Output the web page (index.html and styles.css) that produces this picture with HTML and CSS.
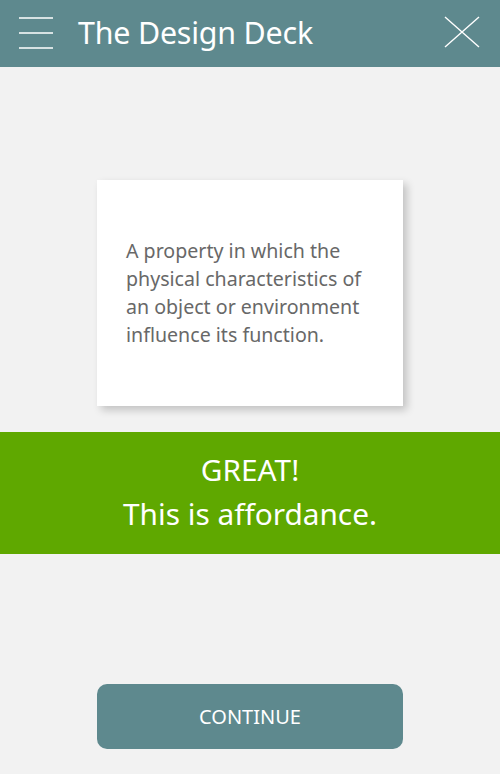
FILE: index.html
```html
<!DOCTYPE html>
<html>
<head>
<meta charset="utf-8">
<link rel="stylesheet" href="styles.css">
</head>
<body>
<div class="app">
  <header class="topbar">
    <svg class="menu" width="36" height="34" viewBox="0 0 36 34">
      <path d="M1 2H35M1 17H35M1 32H35" stroke="#fff" stroke-width="1.3" fill="none"/>
    </svg>
    <h1 class="title">The Design Deck</h1>
    <svg class="close" width="36" height="32" viewBox="0 0 36 32">
      <path d="M1 1L35 31M35 1L1 31" stroke="#fff" stroke-width="1.4" fill="none"/>
    </svg>
  </header>
  <main class="content">
    <div class="card">
      <p>A property in which the physical characteristics of an object or environment influence its function.</p>
    </div>
    <div class="result">
      <div>GREAT!</div>
      <div>This is affordance.</div>
    </div>
    <div class="spacer"></div>
    <button class="continue">CONTINUE</button>
  </main>
</div>
</body>
</html>
```

FILE: styles.css
```css
html, body {
  margin: 0;
  padding: 0;
}
body {
  width: 500px;
  height: 774px;
  background: #f2f2f2;
  font-family: "Noto Sans", "Open Sans", sans-serif;
  overflow: hidden;
}
.app {
  display: flex;
  flex-direction: column;
  height: 774px;
}
.topbar {
  height: 67px;
  background: #5e898e;
  display: flex;
  align-items: center;
  padding: 0 20px 0 18px;
  box-sizing: border-box;
}
.menu {
  display: block;
  margin-top: -1px;
}
.title {
  margin: 0 0 0 24px;
  font-weight: 400;
  font-size: 30.4px;
  color: #fff;
  flex: 1;
  letter-spacing: -0.2px;
  padding-bottom: 2px;
}
.close {
  display: block;
  margin-top: -3px;
}
.content {
  flex: 1;
  display: flex;
  flex-direction: column;
  align-items: center;
}
.card {
  margin-top: 113px;
  width: 306px;
  height: 226px;
  background: #fff;
  box-shadow: 4px 4px 8px rgba(0,0,0,0.2);
  box-sizing: border-box;
  padding: 57px 20px 0 29px;
}
.card p {
  margin: 0;
  font-size: 19.6px;
  line-height: 28px;
  color: #686868;
}
.result {
  margin-top: 26px;
  align-self: stretch;
  height: 122px;
  background: #5fa800;
  color: #fff;
  text-align: center;
  font-size: 29.8px;
  line-height: 44px;
  padding-top: 16px;
  box-sizing: border-box;
}
.spacer {
  flex: 1;
}
.continue {
  width: 306px;
  height: 65px;
  margin-bottom: 25px;
  border: 0;
  border-radius: 10px;
  background: #5e898e;
  color: #fff;
  font-family: "Noto Sans", "Open Sans", sans-serif;
  font-size: 20px;
  padding: 0;
}
```
